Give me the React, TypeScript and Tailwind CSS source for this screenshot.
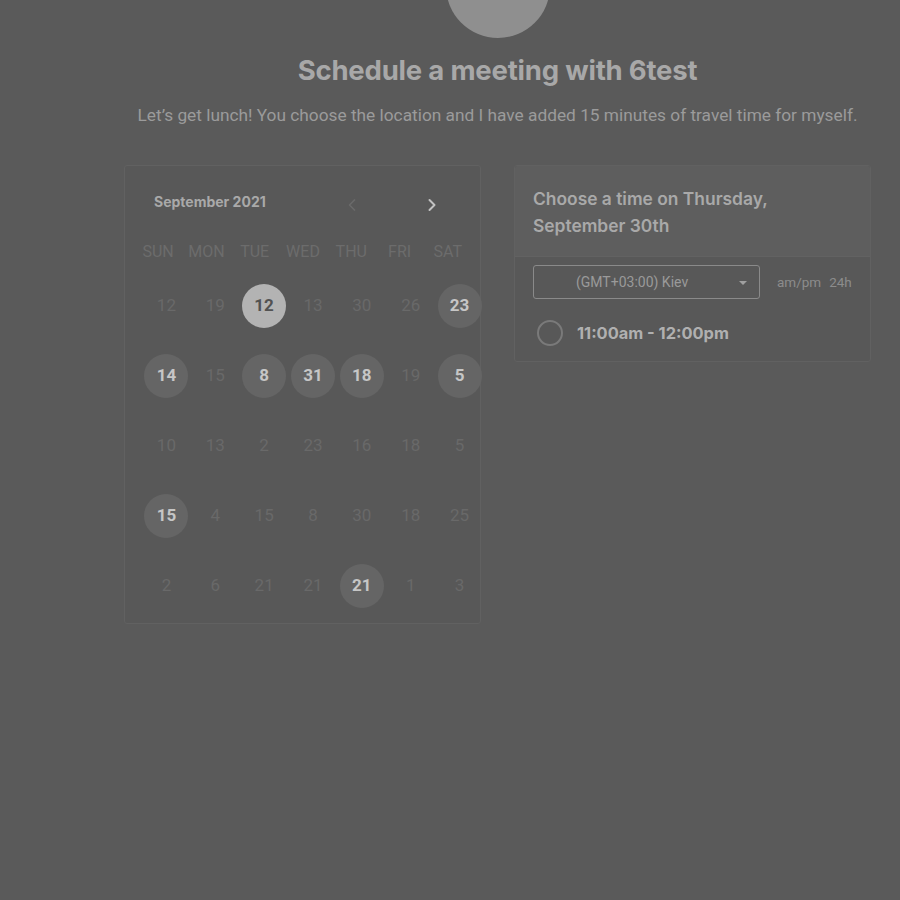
import { ChevronLeft, ChevronRight } from 'lucide-react';

type Day = { n: number; kind: 'off' | 'on' | 'sel' };

const rows: Day[][] = [
  [
    { n: 12, kind: 'off' },
    { n: 19, kind: 'off' },
    { n: 12, kind: 'sel' },
    { n: 13, kind: 'off' },
    { n: 30, kind: 'off' },
    { n: 26, kind: 'off' },
    { n: 23, kind: 'on' },
  ],
  [
    { n: 14, kind: 'on' },
    { n: 15, kind: 'off' },
    { n: 8, kind: 'on' },
    { n: 31, kind: 'on' },
    { n: 18, kind: 'on' },
    { n: 19, kind: 'off' },
    { n: 5, kind: 'on' },
  ],
  [
    { n: 10, kind: 'off' },
    { n: 13, kind: 'off' },
    { n: 2, kind: 'off' },
    { n: 23, kind: 'off' },
    { n: 16, kind: 'off' },
    { n: 18, kind: 'off' },
    { n: 5, kind: 'off' },
  ],
  [
    { n: 15, kind: 'on' },
    { n: 4, kind: 'off' },
    { n: 15, kind: 'off' },
    { n: 8, kind: 'off' },
    { n: 30, kind: 'off' },
    { n: 18, kind: 'off' },
    { n: 25, kind: 'off' },
  ],
  [
    { n: 2, kind: 'off' },
    { n: 6, kind: 'off' },
    { n: 21, kind: 'off' },
    { n: 21, kind: 'off' },
    { n: 21, kind: 'on' },
    { n: 1, kind: 'off' },
    { n: 3, kind: 'off' },
  ],
];

const weekdays = ['SUN', 'MON', 'TUE', 'WED', 'THU', 'FRI', 'SAT'];

function DayCell({ day }: { day: Day }) {
  if (day.kind === 'off') {
    return (
      <div className="h-[70px] flex items-center justify-center text-[17px] text-[#696969]">
        {day.n}
      </div>
    );
  }
  return (
    <div className="h-[70px] flex items-center justify-center">
      <div
        className={
          day.kind === 'sel'
            ? 'w-[44px] h-[44px] rounded-full flex items-center justify-center bg-[#b3b3b3] text-[#525252] text-[17px] font-bold'
            : 'w-[44px] h-[44px] rounded-full flex items-center justify-center bg-[#656565] text-[#c6c6c6] text-[17px] font-bold'
        }
      >
        {day.n}
      </div>
    </div>
  );
}

export default function App() {
  return (
    <div className="min-h-[900px] bg-[#5a5a5a] overflow-hidden font-['Roboto',sans-serif]">
      <div className="flex flex-col items-center w-[747px] ml-[124px]">
        {/* Avatar */}
        <div className="w-[104px] h-[104px] rounded-full bg-[#8f8f8f] -mt-[66px]" />

        {/* Title */}
        <h1 className="mt-[16px] text-[27.5px] leading-[32px] font-bold text-[#a8a8a8] font-['Inter',sans-serif] tracking-[-0.2px]">
          Schedule a meeting with 6test
        </h1>
        <p className="mt-[17px] text-[17.3px] leading-[24px] text-[#9b9b9b] whitespace-nowrap">
          Let’s get lunch! You choose the location and I have added 15 minutes of travel time for myself.
        </p>

        {/* Cards */}
        <div className="mt-[38px] w-full flex items-start gap-[33px]">
          {/* Calendar */}
          <section className="w-[357px] h-[459px] border border-[#616161] rounded-[3px] bg-[#585858]">
            <div className="flex items-center h-[20px] mt-[25px]">
              <span className="ml-[29px] text-[14px] font-bold text-[#a9a9a9] font-['Inter',sans-serif]">
                September 2021
              </span>
              <ChevronLeft className="ml-[76px] w-[20px] h-[20px] mt-[8px] text-[#6a6a6a]" strokeWidth={2} />
              <ChevronRight className="ml-[60px] w-[20px] h-[20px] mt-[8px] text-[#c2c2c2]" strokeWidth={2.4} />
            </div>

            <div className="ml-[9px] w-[338px] mt-[29px] grid grid-cols-7 h-[24px] items-center">
              {weekdays.map((w) => (
                <div key={w} className="text-center text-[16px] text-[#6c6c6c]">
                  {w}
                </div>
              ))}
            </div>

            <div className="ml-[17px] w-[342px] mt-[7px] grid grid-cols-7">
              {rows.map((row, ri) =>
                row.map((d, ci) => <DayCell key={`${ri}-${ci}`} day={d} />)
              )}
            </div>
          </section>

          {/* Time picker */}
          <section className="w-[357px] border border-[#616161] rounded-[3px] bg-[#585858] overflow-hidden">
            <div className="bg-[#5e5e5e] px-[18px] pt-[19px] pb-[17px] border-b border-[#626262]">
              <h2 className="text-[17.4px] leading-[27px] font-semibold text-[#a9a9a9] font-['Inter',sans-serif]">
                Choose a time on Thursday,
                <br />
                September 30th
              </h2>
            </div>
            <div className="flex items-center pl-[18px] pt-[8px]">
              <div className="relative w-[227px] h-[34px] border border-[#8a8a8a] rounded-[3px] flex items-center">
                <span className="ml-[42px] text-[14px] text-[#9a9a9a]">(GMT+03:00) Kiev</span>
                <span className="absolute right-[12px] top-[15px] w-0 h-0 border-l-[4px] border-r-[4px] border-t-[4px] border-l-transparent border-r-transparent border-t-[#a0a0a0]" />
              </div>
              <span className="ml-[17px] text-[13.5px] text-[#8c8c8c]">am/pm</span>
              <span className="ml-[8px] text-[13.5px] text-[#8c8c8c]">24h</span>
            </div>
            <div className="flex items-center h-[52px] pl-[22px] mt-[8px] mb-[2px]">
              <div className="w-[26px] h-[26px] rounded-full border-2 border-[#7a7a7a]" />
              <span className="ml-[14px] text-[16.4px] font-bold text-[#b0b0b0] font-['Inter',sans-serif]">
                11:00am - 12:00pm
              </span>
            </div>
          </section>
        </div>
      </div>
    </div>
  );
}
